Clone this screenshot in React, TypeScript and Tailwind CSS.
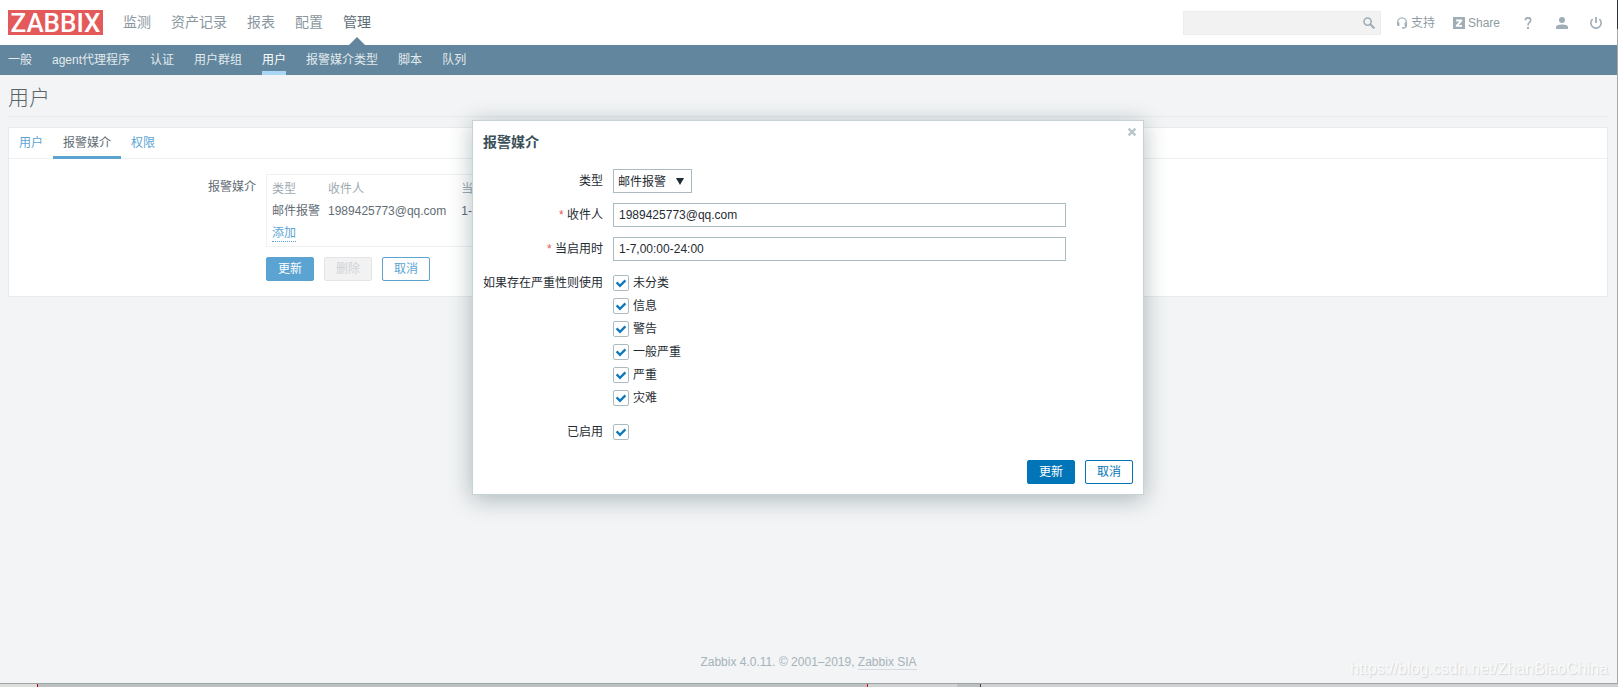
import React, { useState } from "react";

const mainNav = ["监测", "资产记录", "报表", "配置", "管理"];
const subNav = ["一般", "agent代理程序", "认证", "用户群组", "用户", "报警媒介类型", "脚本", "队列"];
const tabs = ["用户", "报警媒介", "权限"];
const severities = ["未分类", "信息", "警告", "一般严重", "严重", "灾难"];

function SearchIcon() {
  return (
    <svg viewBox="0 0 12 12" className="size-3" fill="none" stroke="#9fadb6" aria-hidden="true">
      <circle cx="4.6" cy="4.6" r="3.6" strokeWidth="1.6" />
      <path d="M7.3 7.3 11.4 11.4" strokeWidth="2" />
    </svg>
  );
}

function SupportIcon() {
  return (
    <svg viewBox="0 0 12 12" className="size-3" fill="none" stroke="#9fb0ba" aria-hidden="true">
      <path d="M1.6 8V5.4A4.2 4.4 0 0 1 10.4 5.4V8.6Q10.4 11 7.4 11" strokeWidth="1.3" />
      <path d="M2.4 5.6V9M9.6 5.6V9" strokeWidth="2" />
      <path d="M6 11H8" strokeWidth="1.6" />
    </svg>
  );
}

function ShareIcon() {
  return (
    <svg viewBox="0 0 12 12" className="size-3" aria-hidden="true">
      <rect width="12" height="12" rx="0.6" fill="#9fadb6" />
      <path d="M3.2 2.6H9.2V4.2L5.6 8H9V9.8H2.8V8.2L6.4 4.4H3.2Z" fill="#fff" />
    </svg>
  );
}

function HelpIcon() {
  return (
    <svg viewBox="0 0 12 12" className="size-3" fill="none" stroke="#9fadb6" aria-hidden="true">
      <path d="M3.3 3.4Q3.4 0.8 6 0.8Q8.7 0.8 8.7 3.2Q8.7 4.6 7.2 5.6Q6 6.5 6 8.4" strokeWidth="1.7" />
      <path d="M6 10V12" strokeWidth="1.9" />
    </svg>
  );
}

function UserIcon() {
  return (
    <svg viewBox="0 0 12 12" className="size-3" fill="#9fadb6" aria-hidden="true">
      <circle cx="6" cy="3" r="3" />
      <path d="M0 12V10.2Q0 7.6 6 7.6Q12 7.6 12 10.2V12Z" />
    </svg>
  );
}

function PowerIcon() {
  return (
    <svg viewBox="0 0 12 12" className="size-3" fill="none" stroke="#9fadb6" strokeWidth="1.6" aria-hidden="true">
      <path d="M2.6 2A5.2 5.2 0 1 0 9.4 2" />
      <path d="M6 0V6" strokeWidth="1.8" />
    </svg>
  );
}

function Tick({ id }: { id: string }) {
  const [on, setOn] = useState(true);
  return (
    <span className="relative flex size-4 shrink-0">
      <input
        id={id}
        type="checkbox"
        checked={on}
        onChange={(e) => setOn(e.target.checked)}
        className="size-4 appearance-none rounded-[2px] border border-[#acbbc2] bg-white"
      />
      {on && (
        <svg viewBox="0 0 16 16" className="pointer-events-none absolute inset-0 size-4" fill="none" aria-hidden="true">
          <path d="M3.6 7.4 7 10.8 12.4 5.4" stroke="#0f78bc" strokeWidth="2.3" />
        </svg>
      )}
    </span>
  );
}

function FieldLabel({ htmlFor, required, children }: { htmlFor: string; required?: boolean; children: string }) {
  return (
    <label htmlFor={htmlFor} className="w-30 shrink-0 whitespace-nowrap text-right">
      {required && <span className="text-[#e45959]">* </span>}
      {children}
    </label>
  );
}

const button = "h-6 w-12 rounded-[2px] border pt-px text-center leading-[21px]";

function Header() {
  return (
    <header>
      <div className="flex h-[45px] items-center bg-white pr-[15px] pl-2">
        <a
          href="#home"
          className="flex h-[25px] w-[95px] items-center justify-center bg-[#e45959] font-['Roboto',sans-serif] text-[26px] leading-none font-medium text-white"
        >
          ZABBIX
        </a>
        <nav className="ml-5 flex h-full gap-5 text-[14px] leading-[44px] text-[#8a979f]">
          {mainNav.map((item) => (
            <a
              key={item}
              href="#section"
              className={item === "管理" ? "relative whitespace-nowrap text-[#5d6d76]" : "whitespace-nowrap"}
            >
              {item}
              {item === "管理" && (
                <svg viewBox="0 0 16 8" className="absolute bottom-0 left-1/2 h-2 w-4 -translate-x-1/2" aria-hidden="true">
                  <path d="M0 8 8 0 16 8Z" fill="#61869d" />
                </svg>
              )}
            </a>
          ))}
        </nav>
        <form className="ml-auto flex h-6 w-[198px] items-center border border-[#ebeef0] bg-[#f2f2f2] pr-[5px]">
          <input aria-label="搜索" className="h-full min-w-0 flex-1 bg-transparent px-1 outline-none" />
          <button type="button" aria-label="搜索">
            <SearchIcon />
          </button>
        </form>
        <div className="ml-[15px] flex items-center text-[#8f9ba3]">
          <a href="#support" className="flex items-center gap-[3px]">
            <SupportIcon />
            支持
          </a>
          <a href="#share" className="ml-[18px] flex items-center gap-[3px]">
            <ShareIcon />
            Share
          </a>
          <a href="#help" aria-label="帮助" className="ml-[22px]">
            <HelpIcon />
          </a>
          <a href="#profile" aria-label="个人" className="ml-[22px]">
            <UserIcon />
          </a>
          <a href="#logout" aria-label="退出" className="ml-[22px]">
            <PowerIcon />
          </a>
        </div>
      </div>
      <nav className="flex h-[30px] gap-5 bg-[#61869d] px-2 leading-[30px] text-[#e3eaee]">
        {subNav.map((item) => (
          <a
            key={item}
            href="#page"
            className={
              item === "用户"
                ? "h-[30px] whitespace-nowrap border-b-4 border-[#a9d6f5] text-white"
                : "whitespace-nowrap"
            }
          >
            {item}
          </a>
        ))}
      </nav>
    </header>
  );
}

function UserCard() {
  return (
    <section className="mt-[10px] border border-[#e8ebed] bg-white pb-[15px]">
      <nav className="flex h-[31px] border-b border-[#eff1f3] leading-[30px] text-[#5ba4d2]">
        {tabs.map((tab) => (
          <a
            key={tab}
            href="#tab"
            className={
              tab === "报警媒介"
                ? "h-[31px] border-b-3 border-[#5ba4d2] px-[10px] text-[#636d74]"
                : "px-[10px]"
            }
          >
            {tab}
          </a>
        ))}
      </nav>
      <div className="flex gap-[10px] pt-[15px]">
        <div className="w-[247px] shrink-0 pt-[3px] text-right leading-5 text-[#636d74]">报警媒介</div>
        <div>
          <div className="w-[600px] border border-[#eff1f3] px-[5px] pt-[3px] pb-[2px]">
            <table className="text-left leading-[22px] text-[#636d74]">
              <thead>
                <tr className="text-[#9daab2]">
                  <th className="pr-2 font-normal">类型</th>
                  <th className="pr-[15px] font-normal">收件人</th>
                  <th className="font-normal">当启用时</th>
                </tr>
              </thead>
              <tbody>
                <tr>
                  <td className="pr-2">邮件报警</td>
                  <td className="pr-[15px]">1989425773@qq.com</td>
                  <td>1-7,00:00-24:00</td>
                </tr>
              </tbody>
            </table>
            <div className="h-[22px] leading-[22px]">
              <button type="button" className="border-b border-dotted border-[#5ba4d2] leading-4 text-[#5ba4d2]">
                添加
              </button>
            </div>
          </div>
          <div className="mt-[10px] flex gap-[10px]">
            <button type="button" className={`${button} border-[#5ba4d2] bg-[#5ba4d2] text-white`}>更新</button>
            <button type="button" disabled className={`${button} border-[#e1e5e7] bg-[#f2f2f2] text-[#cfd4d7]`}>删除</button>
            <button type="button" className={`${button} border-[#5ba4d2] bg-white text-[#5ba4d2]`}>取消</button>
          </div>
        </div>
      </div>
    </section>
  );
}

function MediaDialog() {
  const [to, setTo] = useState("1989425773@qq.com");
  const [period, setPeriod] = useState("1-7,00:00-24:00");
  const input = "h-6 w-[453px] border border-[#acbbc2] bg-white px-[5px] outline-none";
  return (
    <div
      role="dialog"
      aria-label="报警媒介"
      className="relative w-[672px] border border-[#c8d2d6] bg-white p-[10px] text-[#1f2c33] shadow-[0_4px_22px_rgba(0,40,50,0.3)]"
    >
      <button
        type="button"
        aria-label="关闭"
        className="absolute top-[7px] right-[7px] flex size-2 text-[#b9c5cb]"
      >
        <svg viewBox="0 0 8 8" className="size-2" stroke="currentColor" strokeWidth="2.4" aria-hidden="true">
          <path d="M0.6 0.6 7.4 7.4M7.4 0.6 0.6 7.4" />
        </svg>
      </button>
      <h2 className="text-[14px] leading-[22px] font-bold text-[#3c4f59]">报警媒介</h2>
      <form className="mt-4 flex flex-col gap-[10px]">
        <div className="flex items-center gap-[10px]">
          <FieldLabel htmlFor="type">类型</FieldLabel>
          <span className="relative flex">
            <select id="type" className="h-6 w-[79px] appearance-none border border-[#acbbc2] bg-white pt-[2px] pl-1 outline-none">
              <option>邮件报警</option>
            </select>
            <svg viewBox="0 0 8 7" className="pointer-events-none absolute top-[9px] right-2 h-[7px] w-2" aria-hidden="true">
              <path d="M0 0H8L4 7Z" fill="#1f2c33" />
            </svg>
          </span>
        </div>
        <div className="flex items-center gap-[10px]">
          <FieldLabel htmlFor="to" required>收件人</FieldLabel>
          <input id="to" value={to} onChange={(e) => setTo(e.target.value)} className={input} />
        </div>
        <div className="flex items-center gap-[10px]">
          <FieldLabel htmlFor="period" required>当启用时</FieldLabel>
          <input id="period" value={period} onChange={(e) => setPeriod(e.target.value)} className={input} />
        </div>
        <div className="flex gap-[10px] pt-[4px]" role="group" aria-labelledby="severity">
          <span id="severity" className="w-30 shrink-0 whitespace-nowrap text-right leading-4">如果存在严重性则使用</span>
          <div className="flex flex-col gap-[7px]">
            {severities.map((name, i) => (
              <div key={name} className="flex h-4 items-center gap-1">
                <Tick id={`severity-${i}`} />
                <label htmlFor={`severity-${i}`}>{name}</label>
              </div>
            ))}
          </div>
        </div>
        <div className="flex items-center gap-[10px] pt-2">
          <FieldLabel htmlFor="enabled">已启用</FieldLabel>
          <Tick id="enabled" />
        </div>
        <div className="mt-[10px] flex justify-end gap-[10px]">
          <button type="button" className={`${button} border-[#0275b8] bg-[#0275b8] text-white`}>更新</button>
          <button type="button" className={`${button} border-[#0275b8] bg-white text-[#0275b8]`}>取消</button>
        </div>
      </form>
    </div>
  );
}

export default function App() {
  return (
    <div className="relative flex min-h-screen flex-col bg-[#f2f4f5] font-['Liberation_Sans','Noto_Sans_CJK_SC',sans-serif] text-[12px] leading-4">
      <div className="flex flex-1">
        <div className="flex min-w-0 flex-1 flex-col">
          <Header />
          <main className="flex-1 pr-[9px] pl-2">
            <h1 className="h-[42px] border-b border-[#e6eaec] text-[21px] leading-[46px] font-light text-[#5a6469]">用户</h1>
            <UserCard />
          </main>
          <footer className="pb-3 text-center leading-[18px] text-[#a6b3ba]">
            Zabbix 4.0.11. © 2001–2019,{" "}
            <a href="#zabbix" className="border-b border-[#d5dbde]">Zabbix SIA</a>
          </footer>
        </div>
        <div className="flex w-px flex-col bg-[#a5a8a8]">
          <div className="h-[29px] bg-[#2c3340]" />
        </div>
      </div>
      <div className="flex h-[4px] border-t border-[#9da4a3] bg-[#cfd2d0]">
        <div className="w-[37px] bg-[#dcdedb]" />
        <div className="w-px bg-[#c00010]" />
        <div className="w-[829px] bg-[#bcc1c1]" />
        <div className="w-px bg-[#d01010]" />
        <div className="w-[89px]" />
        <div className="w-[23px] bg-[#bcc0be]" />
        <div className="w-px bg-[#444]" />
      </div>
      <div className="absolute inset-x-0 top-[120px] flex justify-center pr-[2px]">
        <MediaDialog />
      </div>
      <div className="pointer-events-none absolute right-[10px] bottom-2 text-[16px] leading-5 text-[#fafbfb] [text-shadow:1px_1px_1px_#d3d6d8]">
        https://blog.csdn.net/ZhanBiaoChina
      </div>
    </div>
  );
}
